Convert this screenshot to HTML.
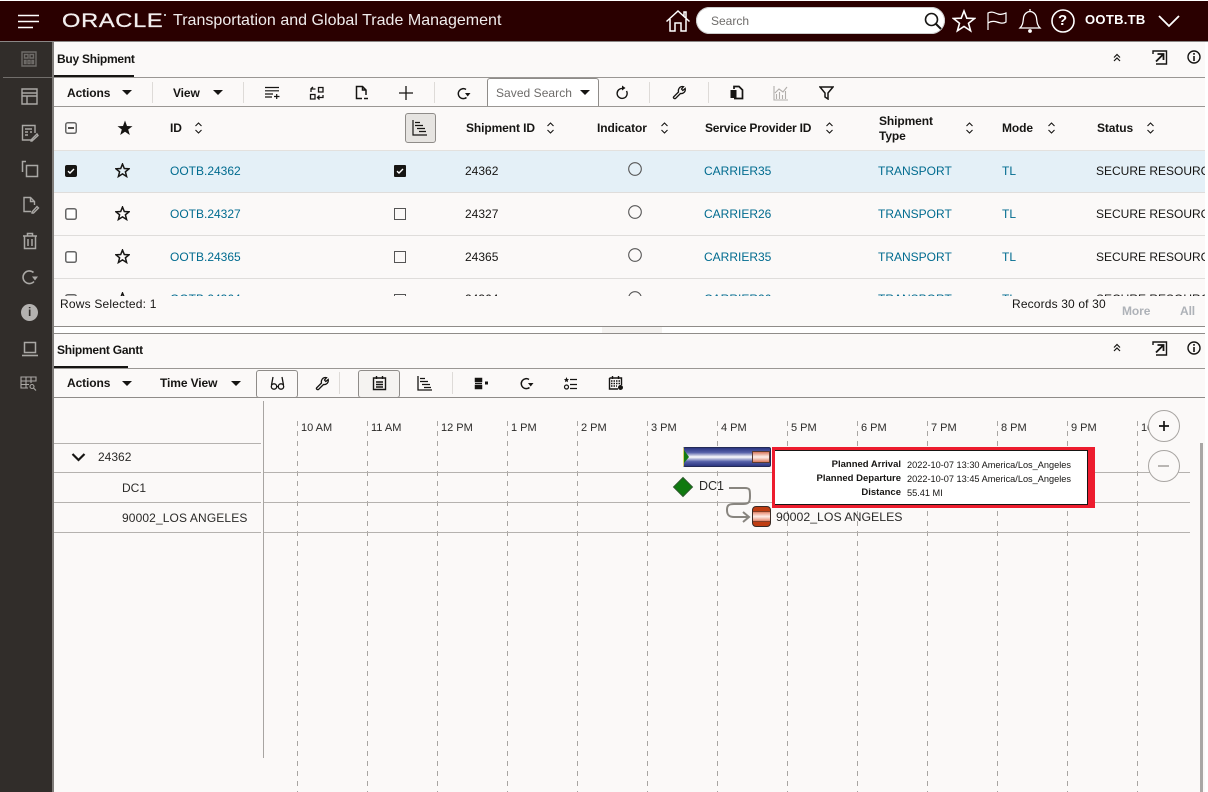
<!DOCTYPE html>
<html><head><meta charset="utf-8"><style>
html,body{margin:0;padding:0;width:1208px;height:792px;overflow:hidden;background:#fbf9f8}
body{position:relative;font-family:"Liberation Sans",sans-serif;font-size:12px;color:#161513}
.a,.t,.b,svg.i{position:absolute}
.t{white-space:nowrap;line-height:14px}
.bd{font-weight:bold;letter-spacing:-.1px}
.l{color:#006b8f}
svg.i{fill:none;stroke:#161513;stroke-width:1.4}
.side svg.i{stroke:#aaa8a5}
.hd svg.i{stroke:#fff}
</style></head><body>
<!-- header -->
<div class="a" style="left:0;top:0;width:1208px;height:1px;background:#fff"></div>
<div class="a" style="left:0;top:1px;width:1208px;height:40px;background:#2a0000"></div>
<div class="a" style="left:0;top:41px;width:1208px;height:1px;background:#8a8786"></div>
<div class="hd">
<svg class="i" style="left:17px;top:14px" width="24" height="16"><path d="M1 1.5H22M1 7.5H22M1 13.5H16" stroke-width="1.6"/></svg>
<div class="t" style="left:62px;top:10px;color:#f3eeee;font-size:19.5px;line-height:22px;letter-spacing:.6px;transform:scaleX(1.21);transform-origin:0 0;-webkit-text-stroke:.3px #f3eeee">ORACLE</div>
<div class="a" style="left:164px;top:14px;width:2px;height:2px;background:#bbb"></div>
<div class="t" style="left:173px;top:11px;color:#f0ecec;font-size:16px;line-height:19px;letter-spacing:.02px">Transportation and Global Trade Management</div>
<svg class="i" style="left:665px;top:9px" width="26" height="24"><path d="M1.5 12.5L13 2 24.500 12.500M5 10V22H10V14H16V22H21V10M19 7V3H21V9" stroke-width="1.5"/></svg>
<div class="a" style="left:696px;top:7px;width:249px;height:27px;background:#fff;border-radius:14px;box-shadow:inset 0 0 0 1px #ccc"></div>
<div class="t" style="left:711px;top:14px;color:#6e6c6a;font-size:12px">Search</div>
<svg class="i" style="left:923px;top:11px;stroke:#161513" width="20" height="20"><circle cx="8.500" cy="8.500" r="6" stroke="#161513" stroke-width="1.600"/><path d="M13 13L18 18" stroke="#161513" stroke-width="2"/></svg>
<svg class="i" style="left:952px;top:9px" width="24" height="24"><path d="M12 2L14.800 9.200 22.500 9.500 16.500 14.300 18.600 21.800 12 17.500 5.400 21.800 7.500 14.300 1.500 9.500 9.200 9.200Z" stroke-width="1.600"/></svg>
<svg class="i" style="left:986px;top:10px" width="22" height="22"><path d="M2 20V3C6 1 9 3 12 4 15 5 17 4 20 3V12C17 14 14 13 11 12 8 11 5 11 2 13" stroke-width="1.200"/></svg>
<svg class="i" style="left:1018px;top:7px" width="24" height="26"><path d="M2 21H22C19 18 19 15 18.500 11 18 7 15 4.500 12 4.500 9 4.500 6 7 5.500 11 5 15 5 18 2 21ZM12 2V4.500" stroke-width="1.300"/><circle cx="12" cy="24" r="1.200" fill="#fff"/></svg>
<svg class="i" style="left:1050px;top:8px" width="26" height="26"><circle cx="13" cy="13" r="11" stroke-width="1.600"/></svg>
<div class="t bd" style="left:1058px;top:13px;color:#fff;font-size:15px;line-height:16px">?</div>
<div class="t bd" style="left:1085px;top:13px;color:#fff;font-size:13px;letter-spacing:.3px">OOTB.TB</div>
<svg class="i" style="left:1157px;top:14px" width="24" height="14"><path d="M2 2L12 12 22 2" stroke-width="1.800"/></svg>
</div>
<!-- sidebar -->
<div class="a side" style="left:0;top:42px;width:52px;height:750px;background:#312d2a">
<div class="a" style="left:3px;top:35px;width:49px;height:1px;background:#716e6b"></div>
<svg class="i" style="left:21px;top:9px;stroke:#6f6c69" width="17" height="17"><path d="M1 1H15V15H1ZM3.500 3.500H7V7H3.500ZM9 3.500H12.500V7H9ZM3.500 9.500H5V12.500H3.500ZM7 9.500H9V12.500H7ZM11 9.500H12.500V12.500H11Z"/></svg>
<svg class="i" style="left:21px;top:46px" width="17" height="17"><path d="M1 1H16V16H1ZM1 5H16M1 8H16M6 8V16"/></svg>
<svg class="i" style="left:21px;top:82px" width="18" height="18"><path d="M12 16H1.500V1.500H14V9M4 5H11M4 8H7M9 8H11M4 11H7M10 16L16 10 17 11.500 11 17H10Z"/></svg>
<svg class="i" style="left:21px;top:118px" width="18" height="18"><path d="M5 1.500H1.500V12M5.500 5.500H16.500V16.500H5.500Z" stroke-width="1.500"/></svg>
<svg class="i" style="left:22px;top:154px" width="18" height="18"><path d="M9 15.500H2V1.500H8.500L12.500 5.500V9M8.500 1.500V5.500H12.500M10 16L15 10.500 16.500 12 11.500 17H10Z"/></svg>
<svg class="i" style="left:22px;top:190px" width="16" height="18"><path d="M1 4H15M5.500 4V1.500H10.500V4M2.500 4V16.500H13.500V4M6 7V14M10 7V14" stroke-width="1.500"/></svg>
<svg class="i" style="left:21px;top:227px" width="18" height="17"><path d="M12.500 3.500A6.300 6.300 0 1 0 13 12.500" stroke-width="1.600"/><path d="M11 7.500H17L14 11.500Z" fill="#aaa8a5" stroke="none"/></svg>
<div class="a" style="left:21px;top:262px;width:17px;height:17px;border-radius:50%;background:#b4b2b0"></div>
<div class="t bd" style="left:28px;top:263px;color:#312d2a;font-size:12px">i</div>
<svg class="i" style="left:21px;top:299px" width="18" height="16"><path d="M3.500 1.500H14.500V11.500H3.500Z" stroke-width="1.500"/><path d="M1 14.500H17" stroke-width="1.600"/></svg>
<svg class="i" style="left:20px;top:334px;stroke-width:1.100" width="18" height="16"><path d="M1 1H16V5H1ZM1 5V12H8M1 8.500H9M6 1V12M11 1V7"/><circle cx="12" cy="10.500" r="2"/><path d="M13.500 12L16 14.500"/></svg>
</div>
<div class="a" style="left:52px;top:42px;width:2px;height:750px;background:#7f7c79"></div>
<!-- right strip -->
<div class="a" style="left:1205px;top:42px;width:3px;height:750px;background:#fff"></div>
<!-- Buy Shipment panel -->
<div class="t bd" style="left:57px;top:52px;font-size:12px;letter-spacing:-.25px">Buy Shipment</div>
<div class="a" style="left:54px;top:77px;width:1151px;height:1px;background:#9a9794"></div>
<div class="a" style="left:54px;top:75px;width:80px;height:2px;background:#161513"></div>
<svg class="i" style="left:1112px;top:53px" width="10" height="10"><path d="M2 4.500L5 1.500 8 4.500M2 8L5 5 8 8" stroke-width="1.200"/></svg>
<svg class="i" style="left:1152px;top:50px" width="16" height="15"><path d="M1 4V1H14.500V14H4" stroke-width="1.400"/><path d="M4 11.500L11 4.500M5.500 4H11.500V10" stroke-width="1.800"/></svg>
<svg class="i" style="left:1187px;top:50px" width="14" height="14"><circle cx="7" cy="7" r="6"/><path d="M7 6V11M7 3V4.800" stroke-width="1.600"/></svg>
<!-- toolbar 1 -->
<div class="t bd" style="left:67px;top:86px">Actions</div>
<svg class="i" style="left:122px;top:90px;stroke:none;fill:#161513" width="10" height="6"><path d="M0 0H10L5 5Z"/></svg>
<div class="a" style="left:152px;top:82px;width:1px;height:21px;background:#dedbd8"></div>
<div class="t bd" style="left:173px;top:86px">View</div>
<svg class="i" style="left:213px;top:90px;stroke:none;fill:#161513" width="10" height="6"><path d="M0 0H10L5 5Z"/></svg>
<div class="a" style="left:243px;top:82px;width:1px;height:21px;background:#dedbd8"></div>
<svg class="i" style="left:264px;top:86px" width="16" height="14"><path d="M1 1.500H15M1 4.800H15M1 8H9M1 11H8M10 10.500H15.500M12.700 8V13" stroke-width="1.200"/></svg>
<svg class="i" style="left:309px;top:86px" width="16" height="15"><path d="M9.500 1.500H14V6H9.500ZM1.500 8.500H6V13H1.500ZM2 6V3H6.500M4 1L1.800 3M14 9V11.500H9M10.500 9.500L8.500 11.500 10.500 13.500" stroke-width="1.300"/></svg>
<svg class="i" style="left:355px;top:85px" width="14" height="16"><path d="M7 13.500H1.500V1.500H7.500L11 5V10M7.500 1.500V5H11M9 13.500H13" stroke-width="1.500"/></svg>
<svg class="i" style="left:399px;top:86px" width="14" height="14"><path d="M7 0V14M0 7H14" stroke-width="1.300"/></svg>
<div class="a" style="left:434px;top:82px;width:1px;height:21px;background:#dedbd8"></div>
<svg class="i" style="left:456px;top:87px" width="15" height="14"><path d="M10 2.500A5 5 0 1 0 10.500 10.500" stroke-width="1.500"/><path d="M9 6H14.500L11.700 9.500Z" fill="#161513" stroke="none"/></svg>
<div class="a" style="left:487px;top:78px;width:110px;height:28px;background:#fff;border:1px solid #8f8c89;border-bottom:none;border-radius:3px 3px 0 0"></div>
<div class="t" style="left:496px;top:86px;color:#6e6c6a;letter-spacing:.05px">Saved Search</div>
<svg class="i" style="left:580px;top:90px;stroke:none;fill:#161513" width="10" height="6"><path d="M0 0H10L5 5Z"/></svg>
<svg class="i" style="left:615px;top:85px" width="13" height="16"><path d="M8 3.500A5 5 0 1 0 11.500 6" stroke-width="1.400"/><path d="M7 0.500V5.500L10.500 3Z" fill="#161513" stroke="none"/></svg>
<div class="a" style="left:649px;top:82px;width:1px;height:21px;background:#dedbd8"></div>
<svg class="i" style="left:672px;top:85px" width="15" height="15"><path d="M1.500 12L6.500 7C5.800 4.500 7.500 1.500 10.500 1.500L11.500 1.700 9.500 4 10.800 5.500 13.200 3.500C13.800 6.500 11.500 9 8.500 8.500L3.500 13.500C2.500 14 1 13 1.500 12Z" stroke-width="1.300"/></svg>
<div class="a" style="left:708px;top:82px;width:1px;height:21px;background:#dedbd8"></div>
<svg class="i" style="left:729px;top:85px" width="15" height="15"><path d="M5 4V1.500H10L13.500 5V13.500H5" stroke-width="1.700"/><rect x="1.500" y="5" width="6" height="8" fill="#161513" stroke="none"/></svg>
<svg class="i" style="left:773px;top:85px;stroke:#b1aeab;stroke-width:1.100" width="16" height="16"><path d="M1 1V15H15M3.500 14V9M6.500 14V7M9.500 14V10M12.500 14V6M2 8L6 4 10 7 14 2"/></svg>
<svg class="i" style="left:819px;top:86px" width="15" height="14"><path d="M1 1H14L9 7V13L6 11V7Z" stroke-width="1.500"/></svg>
<div class="a" style="left:54px;top:106px;width:1151px;height:1px;background:#9a9794"></div>
<!-- table header -->
<svg class="i" style="left:65px;top:122px" width="12" height="12"><rect x=".75" y=".75" width="10.500" height="10.500" rx="2" stroke="#666" stroke-width="1.500"/><path d="M3 6H9" stroke-width="1.500"/></svg>
<svg class="i" style="left:117px;top:120px;stroke:none;fill:#161513" width="16" height="16"><path d="M8 0.500L10 6 15.500 6.200 11.200 9.500 12.800 15 8 11.800 3.200 15 4.800 9.500 0.500 6.200 6 6Z"/></svg>
<div class="t bd" style="left:170px;top:121px">ID</div>
<svg class="i" style="left:194px;top:122px" width="9" height="12"><path d="M1.500 4L4.500 1 7.500 4M1.500 8L4.500 11 7.500 8" stroke-width="1.100"/></svg>
<div class="a" style="left:405px;top:113px;width:29px;height:28px;background:#e6e4e1;border:1px solid #8f8c89;border-radius:3px"></div>
<svg class="i" style="left:412px;top:120px" width="16" height="16" stroke-width="1"><path d="M1 0V15H15M3 2.500H8M3 5.500H11M5 8.500H13M7 11.500H14" stroke-width="1.200"/></svg>
<div class="t bd" style="left:466px;top:121px">Shipment ID</div>
<svg class="i" style="left:546px;top:122px" width="9" height="12"><path d="M1.500 4L4.500 1 7.500 4M1.500 8L4.500 11 7.500 8" stroke-width="1.100"/></svg>
<div class="t bd" style="left:597px;top:121px">Indicator</div>
<svg class="i" style="left:660px;top:122px" width="9" height="12"><path d="M1.500 4L4.500 1 7.500 4M1.500 8L4.500 11 7.500 8" stroke-width="1.100"/></svg>
<div class="t bd" style="left:705px;top:121px;letter-spacing:-.2px">Service Provider ID</div>
<svg class="i" style="left:825px;top:122px" width="9" height="12"><path d="M1.500 4L4.500 1 7.500 4M1.500 8L4.500 11 7.500 8" stroke-width="1.100"/></svg>
<div class="t bd" style="left:879px;top:114px">Shipment</div>
<div class="t bd" style="left:879px;top:129px">Type</div>
<svg class="i" style="left:965px;top:122px" width="9" height="12"><path d="M1.500 4L4.500 1 7.500 4M1.500 8L4.500 11 7.500 8" stroke-width="1.100"/></svg>
<div class="t bd" style="left:1002px;top:121px">Mode</div>
<svg class="i" style="left:1047px;top:122px" width="9" height="12"><path d="M1.500 4L4.500 1 7.500 4M1.500 8L4.500 11 7.500 8" stroke-width="1.100"/></svg>
<div class="t bd" style="left:1097px;top:121px">Status</div>
<svg class="i" style="left:1146px;top:122px" width="9" height="12"><path d="M1.500 4L4.500 1 7.500 4M1.500 8L4.500 11 7.500 8" stroke-width="1.100"/></svg>
<!-- rows -->
<div class="a" style="left:54px;top:150px;width:1151px;height:41px;background:#e4f0f7;border-top:1px solid #e3e1de"></div>
<div class="a" style="left:54px;top:192px;width:1151px;height:1px;background:#dfdddb"></div>
<div class="a" style="left:54px;top:235px;width:1151px;height:1px;background:#dfdddb"></div>
<div class="a" style="left:54px;top:278px;width:1151px;height:1px;background:#dfdddb"></div>
<!-- row 1 -->
<div class="a" style="left:65px;top:165px;width:12px;height:12px;background:#161513;border-radius:2px"></div>
<svg class="i" style="left:65px;top:165px;stroke:#fff" width="12" height="12"><path d="M3 6.200L5 8 9 4" stroke-width="1.400"/></svg>
<svg class="i" style="left:115px;top:163px" width="15" height="15"><path d="M7.500 1L9.300 5.500 14 5.800 10.400 8.800 11.600 13.500 7.500 10.900 3.400 13.500 4.600 8.800 1 5.800 5.700 5.500Z" stroke-width="1.500"/></svg>
<div class="t l" style="left:170px;top:164px">OOTB.24362</div>
<div class="a" style="left:394px;top:165px;width:12px;height:12px;background:#161513;border-radius:1px"></div>
<svg class="i" style="left:394px;top:165px;stroke:#fff" width="12" height="12"><path d="M3 6.200L5 8 9 4" stroke-width="1.400"/></svg>
<div class="t" style="left:465px;top:164px">24362</div>
<svg class="i" style="left:628px;top:162px;stroke:#555" width="15" height="15"><circle cx="7" cy="7" r="6.300" stroke-width="1.100"/></svg>
<div class="t l" style="left:704px;top:164px">CARRIER35</div>
<div class="t l" style="left:878px;top:164px">TRANSPORT</div>
<div class="t l" style="left:1002px;top:164px">TL</div>
<div class="t" style="left:1096px;top:164px;width:109px;overflow:hidden">SECURE RESOURCES</div>
<!-- row 2 -->
<svg class="i" style="left:65px;top:208px" width="12" height="13"><rect x=".75" y=".75" width="10.500" height="10.500" rx="2" stroke="#666" stroke-width="1.500" fill="#fff"/></svg>
<svg class="i" style="left:115px;top:206px" width="15" height="15"><path d="M7.500 1L9.300 5.500 14 5.800 10.400 8.800 11.600 13.500 7.500 10.900 3.400 13.500 4.600 8.800 1 5.800 5.700 5.500Z" stroke-width="1.500"/></svg>
<div class="t l" style="left:170px;top:207px">OOTB.24327</div>
<div class="a" style="left:394px;top:208px;width:10px;height:10px;border:1px solid #555"></div>
<div class="t" style="left:465px;top:207px">24327</div>
<svg class="i" style="left:628px;top:205px;stroke:#555" width="15" height="15"><circle cx="7" cy="7" r="6.300" stroke-width="1.100"/></svg>
<div class="t l" style="left:704px;top:207px">CARRIER26</div>
<div class="t l" style="left:878px;top:207px">TRANSPORT</div>
<div class="t l" style="left:1002px;top:207px">TL</div>
<div class="t" style="left:1096px;top:207px;width:109px;overflow:hidden">SECURE RESOURCES</div>
<!-- row 3 -->
<svg class="i" style="left:65px;top:251px" width="12" height="13"><rect x=".75" y=".75" width="10.500" height="10.500" rx="2" stroke="#666" stroke-width="1.500" fill="#fff"/></svg>
<svg class="i" style="left:115px;top:249px" width="15" height="15"><path d="M7.500 1L9.300 5.500 14 5.800 10.400 8.800 11.600 13.500 7.500 10.900 3.400 13.500 4.600 8.800 1 5.800 5.700 5.500Z" stroke-width="1.500"/></svg>
<div class="t l" style="left:170px;top:250px">OOTB.24365</div>
<div class="a" style="left:394px;top:251px;width:10px;height:10px;border:1px solid #555"></div>
<div class="t" style="left:465px;top:250px">24365</div>
<svg class="i" style="left:628px;top:248px;stroke:#555" width="15" height="15"><circle cx="7" cy="7" r="6.300" stroke-width="1.100"/></svg>
<div class="t l" style="left:704px;top:250px">CARRIER35</div>
<div class="t l" style="left:878px;top:250px">TRANSPORT</div>
<div class="t l" style="left:1002px;top:250px">TL</div>
<div class="t" style="left:1096px;top:250px;width:109px;overflow:hidden">SECURE RESOURCES</div>
<!-- clipped row 4 -->
<div class="a" style="left:54px;top:279px;width:1151px;height:17px;overflow:hidden">
<svg class="i" style="left:11px;top:15px" width="12" height="12"><rect x=".75" y=".75" width="10.500" height="10.500" rx="2" stroke="#666" stroke-width="1.500"/></svg>
<svg class="i" style="left:61px;top:13px" width="15" height="15"><path d="M7.500 1L9.300 5.500 14 5.800 10.400 8.800 11.600 13.500 7.500 10.900 3.400 13.500 4.600 8.800 1 5.800 5.700 5.500Z" stroke-width="1.500"/></svg>
<div class="t l" style="left:116px;top:12.500px">OOTB.24364</div>
<div class="a" style="left:340px;top:15px;width:10px;height:10px;border:1px solid #555"></div>
<div class="t" style="left:411px;top:12.500px">24364</div>
<svg class="i" style="left:574px;top:12px;stroke:#555" width="15" height="15"><circle cx="7" cy="7" r="6.300" stroke-width="1.100"/></svg>
<div class="t l" style="left:650px;top:12.500px">CARRIER26</div>
<div class="t l" style="left:824px;top:12.500px">TRANSPORT</div>
<div class="t l" style="left:948px;top:12.500px">TL</div>
<div class="t" style="left:1042px;top:12.500px">SECURE RESOURCES</div>
</div>
<!-- footer -->
<div class="t" style="left:60px;top:297px;letter-spacing:.2px">Rows Selected: 1</div>
<div class="t" style="left:1012px;top:297px;letter-spacing:.15px">Records 30 of 30</div>
<div class="t bd" style="left:1122px;top:304px;color:#aeb2b8">More</div>
<div class="t bd" style="left:1180px;top:304px;color:#aeb2b8">All</div>
<div class="a" style="left:54px;top:326px;width:1151px;height:1px;background:#8f8c89"></div>
<div class="a" style="left:54px;top:327px;width:1151px;height:6px;background:#fff"></div>
<div class="a" style="left:602px;top:327px;width:60px;height:6px;background:#f4f2f0"></div>
<div class="a" style="left:54px;top:333px;width:1151px;height:1px;background:#8f8c89"></div>
<!-- Gantt panel -->
<div class="t bd" style="left:57px;top:343px;letter-spacing:-.25px">Shipment Gantt</div>
<div class="a" style="left:54px;top:368px;width:1151px;height:1px;background:#9a9794"></div>
<div class="a" style="left:54px;top:366px;width:74px;height:2px;background:#161513"></div>
<svg class="i" style="left:1112px;top:343px" width="10" height="10"><path d="M2 4.500L5 1.500 8 4.500M2 8L5 5 8 8" stroke-width="1.200"/></svg>
<svg class="i" style="left:1152px;top:341px" width="16" height="15"><path d="M1 4V1H14.500V14H4" stroke-width="1.400"/><path d="M4 11.500L11 4.500M5.500 4H11.500V10" stroke-width="1.800"/></svg>
<svg class="i" style="left:1187px;top:341px" width="14" height="14"><circle cx="7" cy="7" r="6"/><path d="M7 6V11M7 3V4.800" stroke-width="1.600"/></svg>
<!-- toolbar 2 -->
<div class="t bd" style="left:67px;top:376px">Actions</div>
<svg class="i" style="left:122px;top:381px;stroke:none;fill:#161513" width="10" height="6"><path d="M0 0H10L5 5Z"/></svg>
<div class="t bd" style="left:160px;top:376px">Time View</div>
<svg class="i" style="left:231px;top:381px;stroke:none;fill:#161513" width="10" height="6"><path d="M0 0H10L5 5Z"/></svg>
<div class="a" style="left:256px;top:370px;width:40px;height:26px;border:1px solid #8f8c89;border-radius:3px"></div>
<svg class="i" style="left:270px;top:376px" width="15" height="15"><path d="M3 1L1.500 9M12 1L13.500 9M6.500 10.500H8.500" stroke-width="1.300"/><circle cx="4" cy="10.500" r="2.700" stroke-width="1.300"/><circle cx="11" cy="10.500" r="2.700" stroke-width="1.300"/></svg>
<svg class="i" style="left:315px;top:376px" width="15" height="15"><path d="M1.500 12L6.500 7C5.800 4.500 7.500 1.500 10.500 1.500L11.500 1.700 9.500 4 10.800 5.500 13.200 3.500C13.800 6.500 11.500 9 8.500 8.500L3.500 13.500C2.500 14 1 13 1.500 12Z" stroke-width="1.300"/></svg>
<div class="a" style="left:339px;top:372px;width:1px;height:22px;background:#dedbd8"></div>
<div class="a" style="left:358px;top:370px;width:40px;height:26px;border:1px solid #8f8c89;border-radius:3px;background:#f5f3f1"></div>
<svg class="i" style="left:372px;top:375px" width="15" height="16"><path d="M1.500 3H13.500V14.500H1.500ZM4.500 1V4M10.500 1V4M4 7H11M4 9.500H11M4 12H11" stroke-width="1.400"/></svg>
<svg class="i" style="left:417px;top:376px" width="15" height="15"><path d="M1 0V14H15M3 2.500H8M3 5.500H11M5 8.500H13M7 11.500H14" stroke-width="1.300"/></svg>
<div class="a" style="left:452px;top:372px;width:1px;height:22px;background:#dedbd8"></div>
<svg class="i" style="left:474px;top:377px" width="15" height="13"><path d="M1.500 1.500H7.500V4.500H1.500ZM1.500 8.500H7.500V11.500H1.500Z" stroke-width="1.500" fill="#161513"/><path d="M1 6.500H8" stroke-width="1.200"/><rect x="11" y="4.500" width="3" height="3" fill="#161513" stroke="none"/></svg>
<svg class="i" style="left:519px;top:377px" width="15" height="14"><path d="M10 2.500A5 5 0 1 0 10.500 10.500" stroke-width="1.500"/><path d="M9 6H14.500L11.700 9.500Z" fill="#161513" stroke="none"/></svg>
<svg class="i" style="left:563px;top:376px" width="15" height="15"><path d="M7 3.500H14M7 8.500H14M7 12.500H14" stroke-width="1.200"/><path d="M3.500 1L4.300 3 6 3.300 4.700 4.500 5 6.300 3.500 5.300 2 6.300 2.300 4.500 1 3.300 2.700 3Z" fill="#161513" stroke="none"/><circle cx="3.500" cy="11" r="2" stroke-width="1.200"/></svg>
<svg class="i" style="left:608px;top:375px" width="16" height="16"><path d="M1.500 3H13.500V10M1.500 3V14H10M4.500 1V4M10.500 1V4" stroke-width="1.400"/><path d="M3 6H12M3 8.500H12M3 11H9" stroke-width="1.500" stroke-dasharray="1.500 1"/><circle cx="12.500" cy="12.500" r="2.500" fill="#161513" stroke="none"/></svg>
<div class="a" style="left:54px;top:397px;width:1151px;height:1px;background:#8f8c89"></div>
<!-- gantt grid -->
<svg class="i" style="left:264px;top:398px;stroke:#a8a5a2" width="944" height="394"><g stroke-width="1" stroke-dasharray="5 5"><path d="M33.500 23V394M103.500 23V394M173.500 23V394M243.500 23V394M313.500 23V394M383.500 23V394M453.500 23V394M523.500 23V394M593.500 23V394M663.500 23V394M733.500 23V394M803.500 23V394M873.500 23V394"/></g></svg>
<div class="a" style="left:263px;top:401px;width:1px;height:357px;background:#a8a5a2"></div>
<div class="a" style="left:54px;top:443px;width:207px;height:1px;background:#b5b2af"></div>
<div class="a" style="left:54px;top:472px;width:207px;height:1px;background:#b5b2af"></div>
<div class="a" style="left:54px;top:502px;width:207px;height:1px;background:#b5b2af"></div>
<div class="a" style="left:54px;top:532px;width:207px;height:1px;background:#b5b2af"></div>
<div class="a" style="left:264px;top:472px;width:926px;height:1px;background:#b5b2af"></div>
<div class="a" style="left:264px;top:502px;width:926px;height:1px;background:#b5b2af"></div>
<div class="a" style="left:264px;top:532px;width:926px;height:1px;background:#b5b2af"></div>
<!-- time labels -->
<div class="t" style="left:301px;top:421px;font-size:11px;color:#2b2a28">10 AM</div>
<div class="t" style="left:371px;top:421px;font-size:11px;color:#2b2a28">11 AM</div>
<div class="t" style="left:441px;top:421px;font-size:11px;color:#2b2a28">12 PM</div>
<div class="t" style="left:511px;top:421px;font-size:11px;color:#2b2a28">1 PM</div>
<div class="t" style="left:581px;top:421px;font-size:11px;color:#2b2a28">2 PM</div>
<div class="t" style="left:651px;top:421px;font-size:11px;color:#2b2a28">3 PM</div>
<div class="t" style="left:721px;top:421px;font-size:11px;color:#2b2a28">4 PM</div>
<div class="t" style="left:791px;top:421px;font-size:11px;color:#2b2a28">5 PM</div>
<div class="t" style="left:861px;top:421px;font-size:11px;color:#2b2a28">6 PM</div>
<div class="t" style="left:931px;top:421px;font-size:11px;color:#2b2a28">7 PM</div>
<div class="t" style="left:1001px;top:421px;font-size:11px;color:#2b2a28">8 PM</div>
<div class="t" style="left:1071px;top:421px;font-size:11px;color:#2b2a28">9 PM</div>
<div class="t" style="left:1141px;top:421px;font-size:11px;color:#2b2a28">10 PM</div>
<!-- row labels -->
<svg class="i" style="left:71px;top:452px" width="15" height="11"><path d="M1.500 2L7.500 8 13.500 2" stroke-width="2.200"/></svg>
<div class="t" style="left:98px;top:450px;color:#2b2a28">24362</div>
<div class="t" style="left:122px;top:481px;color:#2b2a28">DC1</div>
<div class="t" style="left:122px;top:511px;color:#2b2a28;letter-spacing:.12px">90002_LOS ANGELES</div>
<!-- bar -->
<div class="a" style="left:683px;top:447px;width:88px;height:20px;border-radius:2px;box-sizing:border-box;border:1px solid #232a55;background:linear-gradient(#2b3580 0%,#5560a8 25%,#fff 50%,#5560a8 75%,#2b3580 100%)"></div>
<svg class="i" style="left:683px;top:447px;stroke:none" width="8" height="20"><path d="M0 1V19L1 19V1Z" fill="#d6d26a"/><path d="M1 3L6 10 1 16Z" fill="#127a12"/></svg>
<div class="a" style="left:752px;top:451px;width:18px;height:12px;box-sizing:border-box;border:1px solid #5a3a30;background:linear-gradient(#d9785c,#fbe9e2 45%,#fbe9e2 55%,#d9785c)"></div>
<svg class="i" style="left:672px;top:476px;stroke:#2d5a2d" width="22" height="22"><path d="M11 1.500L20.500 11 11 20.500 1.500 11Z" fill="#0f7a0f" stroke-width="1"/></svg>
<div class="t" style="left:699px;top:479px;color:#2b2a28;font-size:12.500px">DC1</div>
<svg class="i" style="left:725px;top:484px;stroke:#88857f" width="30" height="40"><path d="M4 4H20C25 4 25 6 25 12 25 18 24 20 18 20H9C3 20 2 22 2 26 2 31 4 33 9 33H24M18 28L24 33 18 38" stroke-width="2"/></svg>
<div class="a" style="left:752px;top:506px;width:19px;height:21px;box-sizing:border-box;border:1.500px solid #3a2a25;border-radius:4px;background:linear-gradient(#bf3d12 0,#bf3d12 22%,#3a2a25 24%,#e98f75 28%,#fdeee9 50%,#e98f75 72%,#3a2a25 76%,#bf3d12 78%,#bf3d12 100%)"></div>
<div class="t" style="left:776px;top:510px;color:#2b2a28;font-size:12.300px">90002_LOS ANGELES</div>
<!-- popup -->
<div class="a" style="left:772px;top:447px;width:323px;height:61px;box-sizing:border-box;background:#ed1c2e"></div>
<div class="a" style="left:775px;top:450px;width:313px;height:55px;box-sizing:border-box;background:#fff;border:1px solid #161513;border-left:none;border-top-width:1px"></div>
<div class="t bd" style="left:775px;top:458px;width:126px;text-align:right;font-size:9.500px;line-height:14px;letter-spacing:0">Planned Arrival</div>
<div class="t" style="left:907px;top:458px;font-size:9.200px">2022-10-07 13:30 America/Los_Angeles</div>
<div class="t bd" style="left:775px;top:472px;width:126px;text-align:right;font-size:9.500px;letter-spacing:0">Planned Departure</div>
<div class="t" style="left:907px;top:472px;font-size:9.200px">2022-10-07 13:45 America/Los_Angeles</div>
<div class="t bd" style="left:775px;top:486px;width:126px;text-align:right;font-size:9.500px;letter-spacing:0">Distance</div>
<div class="t" style="left:907px;top:486px;font-size:9.200px">55.41 MI</div>
<!-- zoom buttons -->
<div class="a" style="left:1148px;top:410px;width:30px;height:30px;border:1px solid #a8a5a2;border-radius:50%;background:#fbf9f8"></div>
<svg class="i" style="left:1158px;top:420px" width="12" height="12"><path d="M6 1V11M1 6H11" stroke-width="1.700"/></svg>
<div class="a" style="left:1148px;top:450px;width:30px;height:30px;border:1px solid #a8a5a2;border-radius:50%;background:#fbf9f8"></div>
<div class="a" style="left:1158px;top:465px;width:11px;height:2px;background:#b9b6b3"></div>
<div class="a" style="left:1200px;top:443px;width:3px;height:349px;background:#a9a7a5"></div>
</body></html>
